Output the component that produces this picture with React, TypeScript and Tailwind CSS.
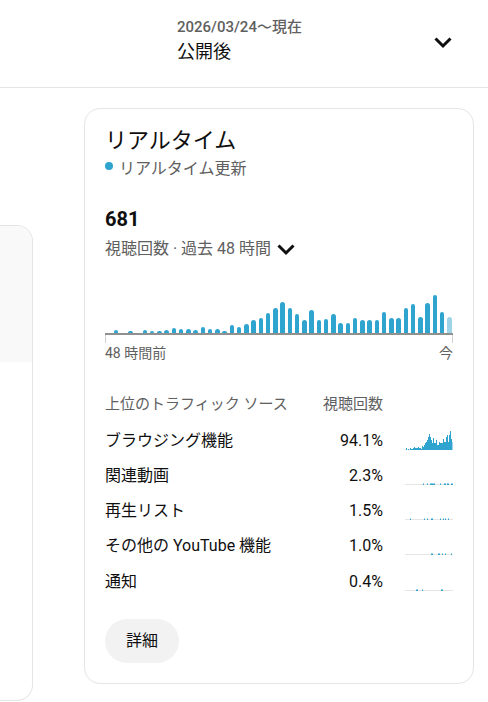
import React from 'react';

// views per hour, last 48 hours (px height in the main chart)
const hourly = [
  0, 3, 0, 1.5, 0, 3, 2, 1, 3, 5, 4, 4, 3, 6, 4, 4, 1.5, 8, 6, 9, 13, 15, 20, 25,
  31, 25, 19, 13, 23, 13, 14, 19, 10, 10, 15, 13, 13, 13, 21, 15, 15, 25, 29, 16,
  30, 38, 21, 16,
];

const BLUE = '#2fa4cf';
const BLUE_LIGHT = '#9fd4e8';

type Mark = [number, number];

interface SourceRow {
  name: string;
  pct: string;
  hist?: number[];
  marks?: Mark[];
}

const sources: SourceRow[] = [
  {
    name: 'ブラウジング機能',
    pct: '94.1%',
    hist: hourly.map((h) => (h === 0 ? 0 : Math.max(1, Math.round(h * 0.5)))),
  },
  {
    name: '関連動画',
    pct: '2.3%',
    marks: [[18, 1], [22, 1], [25, 5], [35, 1], [39, 2], [42, 2], [46, 2]],
  },
  {
    name: '再生リスト',
    pct: '1.5%',
    marks: [[5, 1], [19, 1], [22, 1], [26, 2], [35, 1], [38, 1], [40, 1], [43, 1]],
  },
  {
    name: 'その他の YouTube 機能',
    pct: '1.0%',
    marks: [[26, 2], [33, 2], [37, 1], [40, 1], [46, 1]],
  },
  {
    name: '通知',
    pct: '0.4%',
    marks: [[11, 2], [17, 1], [36, 2]],
  },
];

const Chevron = ({ className }: { className?: string }) => (
  <svg viewBox="0 0 24 24" className={className} fill="none" stroke="currentColor" strokeWidth={3}>
    <path d="M4.5 8.5L12 16l7.5-7.5" />
  </svg>
);

const Spark = ({ hist, marks }: { hist?: number[]; marks?: Mark[] }) => (
  <svg width="48" height="20" viewBox="0 0 48 20" className="shrink-0">
    <rect x="0" y="18" width="48" height="1" fill="#e5e5e5" />
    {hist?.map((h, i) =>
      h > 0 ? (
        <rect key={i} x={i} y={19 - h} width="1" height={h} fill={i === 47 ? BLUE_LIGHT : BLUE} />
      ) : null,
    )}
    {marks?.map(([x, w], i) => (
      <rect key={i} x={x} y="17.5" width={w} height="1.5" fill={BLUE} />
    ))}
  </svg>
);

export default function App() {
  return (
    <div className="min-h-[702px] w-[488px] overflow-hidden bg-white font-[Roboto,'Noto_Sans_CJK_JP',sans-serif] text-[#0f0f0f]">
      {/* Date range picker */}
      <div className="flex h-[88px] items-start justify-between border-b border-[#e5e5e5] pl-[177px] pr-[33px] pt-[17px]">
        <div>
          <div className="text-[15px] font-medium leading-5 text-[#606060]">2026/03/24～現在</div>
          <div className="mt-[2px] text-[18px] leading-[26px]">公開後</div>
        </div>
        <Chevron className="mt-[13px] size-6" />
      </div>

      <div className="flex items-start">
        {/* Left card, mostly scrolled off */}
        <div className="mt-[137px] h-[476px] w-[33px] shrink-0 overflow-hidden rounded-r-2xl border border-l-0 border-[#e5e5e5]">
          <div className="h-[136px] bg-[#f9f9f9]" />
        </div>

        {/* Realtime card */}
        <div className="ml-[51px] mt-[20px] w-[390px] shrink-0 rounded-2xl border border-[#e5e5e5] px-5 pb-5 pt-[18px]">
          <div className="text-[22px] leading-7">リアルタイム</div>
          <div className="mt-[2px] flex items-center gap-[6px] text-[16px] leading-6 text-[#606060]">
            <span className="-mt-[6px] size-2 rounded-full bg-[#2fa4cf]" />
            <span>リアルタイム更新</span>
          </div>

          <div className="mt-6 text-[20px] font-bold leading-7">681</div>
          <div className="mt-1 flex items-center gap-[3px] text-[16px] leading-6 text-[#606060]">
            <span>視聴回数 · 過去 48 時間</span>
            <Chevron className="size-6 text-[#0f0f0f]" />
          </div>

          {/* Hourly chart */}
          <div className="mt-[2px]">
            <div className="flex h-[70px] items-end">
              {hourly.map((h, i) => (
                <div key={i} className="flex flex-1 justify-center">
                  {h > 0 && (
                    <div
                      className={`w-[4.5px] rounded-t-full ${i === 47 ? 'bg-[#9fd4e8]' : 'bg-[#2fa4cf]'}`}
                      style={{ height: Math.max(h, 2) }}
                    />
                  )}
                </div>
              ))}
            </div>
            <div className="h-[2px] bg-[#909090]" />
            <div className="flex h-2 justify-between">
              <div className="w-px bg-[#d0d0d0]" />
              <div className="w-px bg-[#d0d0d0]" />
            </div>
            <div className="flex justify-between text-[14px] leading-5 text-[#606060]">
              <span>48 時間前</span>
              <span>今</span>
            </div>
          </div>

          {/* Top traffic sources */}
          <div className="mt-[29px] flex items-center text-[15px] leading-6 text-[#606060]">
            <span className="flex-1">上位のトラフィック ソース</span>
            <span>視聴回数</span>
            <span className="w-[70px]" />
          </div>
          <div className="mt-[7px]">
            {sources.map((s) => (
              <div key={s.name} className="flex h-[35.25px] items-center text-[16px]">
                <span className="flex-1">{s.name}</span>
                <span>{s.pct}</span>
                <span className="ml-[22px] flex h-5 items-center">
                  <Spark hist={s.hist} marks={s.marks} />
                </span>
              </div>
            ))}
          </div>

          <button className="mt-5 h-11 rounded-full bg-[#f2f2f2] px-[21px] text-[16px]">
            詳細
          </button>
        </div>
      </div>
    </div>
  );
}
